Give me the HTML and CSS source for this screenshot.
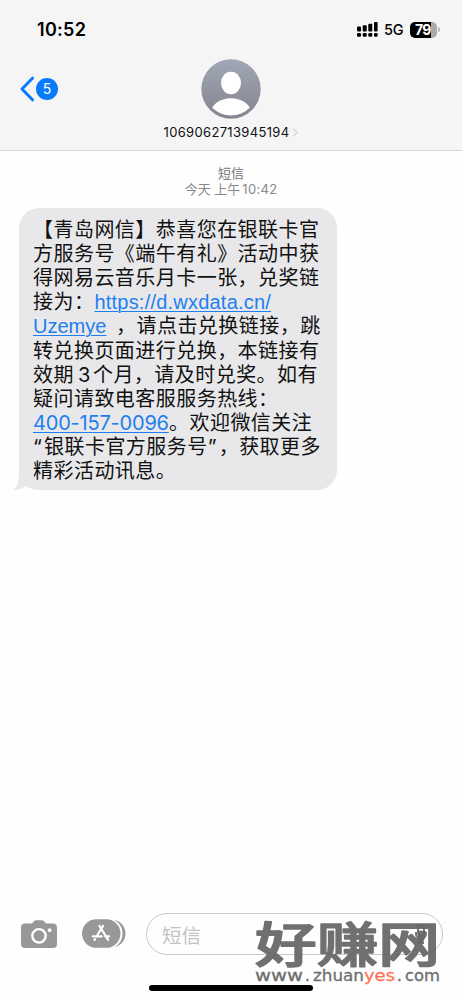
FILE: index.html
```html
<!DOCTYPE html>
<html lang="zh-CN">
<head>
<meta charset="utf-8">
<title>短信</title>
<link rel="stylesheet" href="styles.css">
</head>
<body>
<div class="phone">
  <header class="header">
    <div class="status">
      <span class="time">10:52</span>
      <div class="indicators">
        <svg class="signal" width="21" height="15" viewBox="0 0 21 15">
          <rect x="0" y="4.6" width="4" height="5" rx="1"/><rect x="5.7" y="3.3" width="4" height="6.3" rx="1"/><rect x="11.3" y="1.7" width="4" height="7.9" rx="1"/><rect x="17" y="0" width="3.6" height="9.6" rx="1"/>
          <rect x="0" y="11" width="4" height="3.8" rx="1.3"/><rect x="5.7" y="11" width="4" height="3.8" rx="1.3"/><rect x="11.3" y="11" width="4" height="3.8" rx="1.3"/><rect x="17" y="11" width="3.6" height="3.8" rx="1.3"/>
        </svg>
        <span class="network">5G</span>
        <span class="battery">79</span><span class="battery-tip"></span>
      </div>
    </div>
    <div class="nav">
      <div class="back">
        <svg width="16" height="26" viewBox="0 0 16 26"><path d="M13.500 2.200 3 13l10.500 10.800" fill="none" stroke="#087bfb" stroke-width="3" stroke-linecap="round" stroke-linejoin="round"/></svg>
        <span class="count">5</span>
      </div>
      <div class="contact">
        <svg width="60" height="60" viewBox="0 0 60 60">
          <defs><linearGradient id="avatar" x1="0" y1="0" x2="0" y2="1"><stop offset="0" stop-color="#a1a7b5"/><stop offset="1" stop-color="#83858f"/></linearGradient><clipPath id="disc"><circle cx="30" cy="30" r="26.5"/></clipPath></defs>
          <circle cx="30" cy="30" r="29.7" fill="url(#avatar)"/>
          <ellipse cx="30" cy="24" rx="10" ry="11.3" fill="#fff"/>
          <ellipse cx="30" cy="54" rx="20" ry="14.7" fill="#fff" clip-path="url(#disc)"/>
        </svg>
        <div class="number">1069062713945194<svg width="6" height="9" viewBox="0 0 6 9"><path d="m1 .5 4 4-4 4" fill="none" stroke="#b9b9bd"/></svg></div>
      </div>
    </div>
  </header>
  <main class="thread">
    <div class="stamp"><b>短信</b><span>今天 上午<i>10:42</i></span></div>
    <div class="bubble">
      <svg class="tail" width="25" height="20" viewBox="0 0 25 20"><path d="M6 0C6 10 5 16 0 18.4 5 19.2 9 18 12 15L22 19 20 0Z" fill="#e8e8ea"/></svg>
      <p>【青岛网信】恭喜您在银联卡官</p>
      <p>方服务号《端午有礼》活动中获</p>
      <p>得网易云音乐月卡一张，兑奖链</p>
      <p>接为：<a class="url">https://d.wxdata.cn/</a></p>
      <p><a class="code">Uzemye</a><span class="comma">，</span>请点击兑换链接，跳</p>
      <p>转兑换页面进行兑换，本链接有</p>
      <p>效期<span class="digit">3</span>个月，请及时兑奖。如有</p>
      <p>疑问请致电客服服务热线：</p>
      <p><a class="tel">400-157-0096</a>。欢迎微信关注</p>
      <p><span class="quote">“</span>银联卡官方服务号<span class="quote">”</span>，获取更多</p>
      <p>精彩活动讯息。</p>
    </div>
  </main>
  <footer class="composer">
    <svg class="camera" width="36" height="28" viewBox="0 0 36 28">
      <path d="M4 3.5h6.5C12 3.5 12.5.3 15 .3h6c2.500 0 3 3.200 4.500 3.200H32a4 4 0 0 1 4 4V24a4 4 0 0 1-4 4H4a4 4 0 0 1-4-4V7.500a4 4 0 0 1 4-4Z" fill="#98989b"/>
      <circle cx="18" cy="15.800" r="6.700" fill="none" stroke="#fff" stroke-width="2.400"/><circle cx="28.600" cy="10.200" r="1.900" fill="#fff"/>
    </svg>
    <svg class="apps" width="44" height="29" viewBox="0 0 44 29">
      <rect x="10" y=".8" width="33.500" height="27.500" rx="13.700" fill="#98989b"/>
      <rect x="-1" y="-.7" width="41.500" height="30.500" rx="15" fill="#fff"/>
      <rect x="0" y=".3" width="38.500" height="28.500" rx="14.200" fill="#98989b"/>
      <path d="m17.500 7 8.500 13.700M21 7l-6.500 10.500M10.800 17.300h9M23.300 17.300h3.700M12.600 20.800l.3-.5" fill="none" stroke="#fff" stroke-width="2.300" stroke-linecap="round"/>
    </svg>
    <div class="field"><span>短信</span>
      <svg width="12" height="20" viewBox="0 0 12 20"><rect x="3" y="1" width="6" height="11" rx="3"/><path d="M1 8v2a5 5 0 0 0 10 0V8M6 15v4M3 19h6"/></svg>
    </div>
  </footer>
  <div class="home"></div>
  <svg class="watermark" width="190" height="70" viewBox="0 0 190 70">
    <text class="brand" transform="translate(3 42) scale(1 .78)" x="0" y="0" textLength="185" lengthAdjust="spacingAndGlyphs">好赚网</text>
    <g class="domain" transform="translate(0 61)">
      <text x="3" y="0" textLength="48" lengthAdjust="spacingAndGlyphs">www</text>
      <text x="53" y="0">.</text>
      <text x="61" y="0" textLength="51" lengthAdjust="spacingAndGlyphs">zhuan</text>
      <text class="accent" x="112" y="0" textLength="31" lengthAdjust="spacingAndGlyphs">yes</text>
      <text x="145" y="0">.</text>
      <text x="153" y="0" textLength="35" lengthAdjust="spacingAndGlyphs">com</text>
    </g>
  </svg>
</div>
</body>
</html>
```
FILE: styles.css
```css
* { box-sizing: border-box; }
body { margin: 0; background: #fff; font-family: Inter, "Noto Sans CJK SC", sans-serif; color: #111; }
.phone { position: relative; width: 462px; height: 1000px; overflow: hidden; display: flex; flex-direction: column; background: #fefefe; }
.header { height: 151px; background: #f5f5f5; border-bottom: 1px solid #d4d4d5; flex: none; }
.status { height: 59px; padding: 18px 22px 0 37px; display: flex; justify-content: space-between; align-items: flex-start; color: #000; }
.time { font-size: 18px; line-height: 24px; font-weight: 600; letter-spacing: .3px; }
.indicators { display: flex; align-items: center; height: 23px; }
.signal { margin-right: 6px; }
.network { font-size: 14.500px; line-height: 20px; margin-right: 6px; font-weight: 500; width: 20px; letter-spacing: -.3px; }
.battery { width: 27px; height: 16px; border-radius: 5px; background: linear-gradient(90deg, #000 0 79%, #aaa 79%); color: #fff; font-size: 14px; line-height: 16px; font-weight: 700; padding-left: 5px; letter-spacing: -.7px; }
.battery-tip { width: 2px; height: 5px; margin-left: 1px; border-radius: 0 2px 2px 0; background: #b5b5b5; }
.nav { display: grid; grid-template-columns: 1fr 136px 1fr; }
.back { display: flex; align-items: center; gap: 1px; height: 60px; padding-left: 19px; }
.count { width: 22px; height: 22px; border-radius: 50%; background: #087bfb; color: #fff; font-size: 14px; line-height: 22px; text-align: center; }
.contact { display: flex; flex-direction: column; align-items: center; }
.number { display: flex; align-items: center; gap: 3px; white-space: nowrap; font-size: 13px; line-height: 16px; margin-top: 5px; letter-spacing: .33px; }
.thread { flex: 1; padding: 15px 0 0 19px; }
.stamp { width: 424px; display: flex; flex-direction: column; align-items: center; font-size: 13px; line-height: 15.500px; color: #88888c; }
.stamp b { font-weight: 500; }
.stamp i { font-style: normal; margin-left: 2px; letter-spacing: .3px; }
.bubble { position: relative; width: 318px; height: 282px; margin-top: 11px; padding: 10px 0 0 14px; border-radius: 20px; background: #e8e8ea; }
.bubble p { margin: 0; height: 24.120px; line-height: 24.500px; font-size: 20px; letter-spacing: .46px; white-space: nowrap; display: flex; }
.bubble a { color: #1d7ff0; text-decoration: underline; text-decoration-thickness: 1px; text-underline-offset: 2px; letter-spacing: 0; }
.tail { position: absolute; left: -6px; bottom: -1px; }
.bubble .url, .bubble .code { font-family: "Liberation Sans", sans-serif; }
.bubble .url { width: 177px; letter-spacing: .22px; }
.code { width: 73px; }
.bubble .tel { width: 136px; letter-spacing: -.2px; }
.comma { margin-left: 10px; }
.digit { width: 15px; margin-left: 4px; }
.quote { width: 11px; }
.composer { height: 71px; display: flex; align-items: flex-start; padding: 0 19px 0 21px; flex: none; margin-bottom: 16px; }
.camera { margin: 7px 25px 0 0; }
.apps { margin: 6px 20px 0 0; }
.field { flex: 1; height: 42px; border: 1px solid #c7c7ca; border-radius: 21px; padding: 0 15px; display: flex; align-items: center; justify-content: space-between; font-size: 19.500px; color: #c2c2c6; }
.field svg { fill: none; stroke: #77777b; stroke-width: 2; }
.home { position: absolute; left: 149px; top: 985px; width: 164px; height: 6px; border-radius: 3px; background: #000; }
.watermark { position: absolute; left: 252px; top: 920px; }
.brand { font: 500 61px "Noto Sans CJK SC", sans-serif; fill: #666; stroke: #666; stroke-width: 2px; stroke-linejoin: round; opacity: .93; }
.domain { font: 500 15px "DejaVu Sans", sans-serif; fill: #6f6f70; stroke: #6f6f70; stroke-width: .3px; }
.domain .accent { fill: #ff7658; stroke: #ff7658; }
```
